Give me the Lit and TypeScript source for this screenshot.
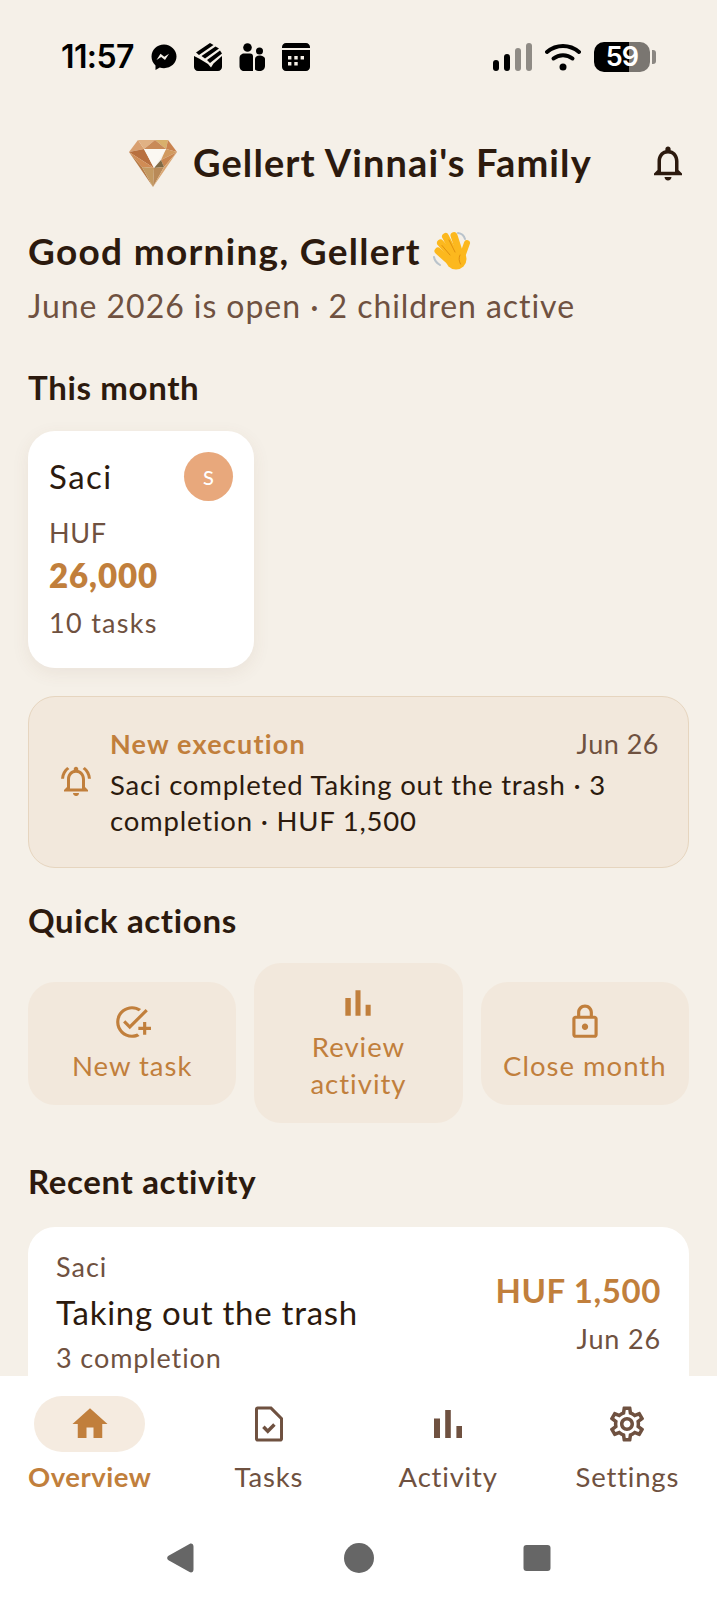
import { LitElement, html, css, svg } from "lit";
import { customElement } from "lit/decorators.js";

const BELL = "M12 22c1.1 0 2-.9 2-2h-4c0 1.1.9 2 2 2zm6-6v-5c0-3.07-1.63-5.64-4.5-6.32V4c0-.83-.67-1.5-1.5-1.5s-1.5.67-1.5 1.5v.68C7.64 5.36 6 7.92 6 11v5l-2 2v1h16v-1l-2-2zm-2 1H8v-6c0-2.48 1.51-4.5 4-4.5s4 2.02 4 4.5v6z";
const ALARM = "M7.58 4.08L6.15 2.65C3.75 4.48 2.17 7.3 2.03 10.5h2c.15-2.65 1.51-4.97 3.55-6.42zm12.39 6.42h2c-.15-3.2-1.73-6.02-4.12-7.85l-1.42 1.43c2.02 1.45 3.39 3.77 3.54 6.42zM18 11c0-3.07-1.64-5.64-4.5-6.32V4c0-.83-.67-1.5-1.5-1.5s-1.5.67-1.5 1.5v.68C7.63 5.36 6 7.92 6 11v5l-2 2v1h16v-1l-2-2v-5zm-2 6H8v-6c0-2.48 1.51-4.5 4-4.5s4 2.02 4 4.5v6zm-4 5c.14 0 .27-.01.4-.04.65-.14 1.18-.58 1.44-1.18.1-.24.15-.5.15-.78h-4c.01 1.1.9 2 2.01 2z";
const ADD_TASK = "M22 5.18L10.59 16.6l-4.24-4.24 1.41-1.41 2.83 2.83 10-10L22 5.18zM12 20c-4.41 0-8-3.59-8-8s3.59-8 8-8c1.57 0 3.04.46 4.28 1.25l1.45-1.45C16.1 2.67 14.13 2 12 2 6.48 2 2 6.48 2 12s4.48 10 10 10c1.73 0 3.36-.44 4.78-1.22l-1.5-1.5c-1 .46-2.11.72-3.28.72zm7-5h-3v2h3v3h2v-3h3v-2h-3v-3h-2v3z";
const CHART = "M5 9.2h3V19H5zM10.6 5h2.8v14h-2.8zm5.6 8H19v6h-2.8z";
const LOCK = "M18 8h-1V6c0-2.76-2.24-5-5-5S7 3.24 7 6v2H6c-1.1 0-2 .9-2 2v10c0 1.1.9 2 2 2h12c1.1 0 2-.9 2-2V10c0-1.1-.9-2-2-2zM9 6c0-1.66 1.34-3 3-3s3 1.34 3 3v2H9V6zm9 14H6V10h12v10zm-6-3c1.1 0 2-.9 2-2s-.9-2-2-2-2 .9-2 2 .9 2 2 2z";
const HOME = "M10 20v-6h4v6h5v-8h3L12 3 2 12h3v8z";
const TASK = "M5.500 2h8l6.500 6.500v12c0 .8-.7 1.500-1.500 1.500h-13C4.700 22 4 21.300 4 20.500v-17C4 2.700 4.700 2 5.500 2zM5.700 3.700v16.600h12.600V9.300L12.700 3.700zM8.100 14.300l1.400-1.400 1.800 1.800 3.100-3.100 1.400 1.400-4.500 4.500z";
const GEAR = "M19.43 12.98c.04-.32.07-.64.07-.98 0-.34-.03-.66-.07-.98l2.11-1.65c.19-.15.24-.42.12-.64l-2-3.46c-.09-.16-.26-.25-.44-.25-.06 0-.12.01-.17.03l-2.49 1c-.52-.4-1.08-.73-1.69-.98l-.38-2.65C14.46 2.18 14.25 2 14 2h-4c-.25 0-.46.18-.49.42l-.38 2.65c-.61.25-1.17.59-1.69.98l-2.49-1c-.06-.02-.12-.03-.18-.03-.17 0-.34.09-.43.25l-2 3.46c-.13.22-.07.49.12.64l2.11 1.65c-.04.32-.07.65-.07.98 0 .33.03.66.07.98l-2.11 1.65c-.19.15-.24.42-.12.64l2 3.46c.09.16.26.25.44.25.06 0 .12-.01.17-.03l2.49-1c.52.4 1.08.73 1.69.98l.38 2.65c.03.24.24.42.49.42h4c.25 0 .46-.18.49-.42l.38-2.65c.61-.25 1.17-.59 1.69-.98l2.49 1c.06.02.12.03.18.03.17 0 .34-.09.43-.25l2-3.46c.12-.22.07-.49-.12-.64l-2.11-1.65zm-1.98-1.71c.04.31.05.52.05.73 0 .21-.02.43-.05.73l-.14 1.13.89.7 1.08.84-.7 1.21-1.27-.51-1.04-.42-.9.68c-.43.32-.84.56-1.25.73l-1.06.43-.16 1.13-.2 1.35h-1.4l-.19-1.35-.16-1.13-1.06-.43c-.43-.18-.83-.41-1.23-.71l-.91-.7-1.06.43-1.27.51-.7-1.21 1.08-.84.89-.7-.14-1.13c-.03-.31-.05-.54-.05-.74s.02-.43.05-.73l.14-1.13-.89-.7-1.08-.84.7-1.21 1.27.51 1.04.42.9-.68c.43-.32.84-.56 1.25-.73l1.06-.43.16-1.13.2-1.35h1.39l.19 1.35.16 1.13 1.06.43c.43.18.83.41 1.23.71l.91.7 1.06-.43 1.27-.51.7 1.21-1.07.85-.89.7.14 1.13zM12 8c-2.21 0-4 1.79-4 4s1.79 4 4 4 4-1.79 4-4-1.79-4-4-4zm0 6c-1.1 0-2-.9-2-2s.9-2 2-2 2 .9 2 2-.9 2-2 2z";

// chart glyph sits small in its 24 box, so it gets a tighter viewBox
const icon = (d: string, size: number, box = "0 0 24 24") => html`<svg width=${size} height=${size} viewBox=${box} fill="currentColor" fill-rule="evenodd">${svg`<path d=${d}></path>`}</svg>`;

const actions = [
  { label: "New task", d: ADD_TASK, box: "0 0 24 24" },
  { label: "Review activity", d: CHART, box: "1.5 1.5 21 21" },
  { label: "Close month", d: LOCK, box: "0 0 24 24" },
];

const tabs = [
  { label: "Overview", d: HOME, box: "0 0 24 24", active: true },
  { label: "Tasks", d: TASK, box: "0 0 24 24", active: false },
  { label: "Activity", d: CHART, box: "1.5 1.5 21 21", active: false },
  { label: "Settings", d: GEAR, box: "0 0 24 24", active: false },
];

// facets of the gem logo: colour, points
const gem: [string, string][] = [
  ["#d9a070", "18,27 27,15 33,24"],
  ["#e0b184", "27,15 44,15 33,24"],
  ["#d8b06c", "44,15 57,15 55,24"],
  ["#c98a58", "44,15 33,24 55,24"],
  ["#c9834f", "57,15 66,27 55,24"],
  ["#b8703f", "18,27 33,24 43,43"],
  ["#d08c55", "18,27 43,43 31,42"],
  ["#b67a45", "18,27 31,42 42,62"],
  ["#c49a62", "31,42 43,43 42,62"],
  ["#d19a5f", "66,27 55,24 50,35"],
  ["#c98650", "66,27 50,35 53,42"],
  ["#7f6a45", "50,35 53,42 43,43"],
  ["#b98a58", "43,43 53,42 42,62"],
  ["#d9a672", "66,27 53,42 42,62"],
  ["#fbf8f2", "33,24 55,24 43,43"],
];

// the waving hand, one stroke per finger: x1 y1 x2 y2
const fingers = [
  [7, 21, 17, 30],
  [9.5, 13, 20, 25],
  [14.5, 6.5, 23, 23],
  [23, 5.5, 28, 21],
];

@customElement("app-root")
export class AppRoot extends LitElement {
  static styles = css`
    :host {
      display: block;
      font-family: "Lato", "Noto Sans", sans-serif;
      color: #2c1a0e;
    }
    * { box-sizing: border-box; }
    .screen {
      height: 1600px;
      display: flex;
      flex-direction: column;
      background: #f5f0e8;
      overflow: hidden;
    }

    .status {
      flex: none;
      height: 114px;
      padding: 0 61px;
      display: flex;
      align-items: center;
      color: #000;
    }
    .time {
      font: 600 32px/1 "Inter", sans-serif;
      letter-spacing: -0.6px;
      margin-right: 17px;
    }
    .status-icons { display: flex; align-items: center; gap: 17px; }
    .status-right { margin-left: auto; display: flex; align-items: center; gap: 13px; }
    .status svg { display: block; }
    .battery { display: flex; align-items: center; gap: 2px; }
    .battery-body {
      width: 56px;
      height: 30px;
      border-radius: 10px;
      background: linear-gradient(90deg, #000 62%, #7a7671 62%);
      color: #fff;
      font: 600 27px/30px "Inter", sans-serif;
      letter-spacing: -1px;
      text-align: center;
    }
    .battery-nub { width: 4px; height: 14px; border-radius: 0 3px 3px 0; background: #8b8782; }

    .header {
      flex: none;
      height: 100px;
      padding: 0 28px 0 128px;
      display: flex;
      align-items: center;
      gap: 15px;
    }
    .header h1 {
      margin: 0 0 4px;
      font-size: 38px;
      line-height: 48px;
      font-weight: 700;
      letter-spacing: 1.1px;
    }
    .header .bell { margin-left: auto; display: block; color: #2c1a0e; }
    .logo { display: block; }

    .content { flex: 1; min-height: 0; overflow: hidden; padding: 15px 28px 0; }
    .greeting { display: flex; align-items: center; gap: 10px; }
    .greeting h2 { margin: 0; font-size: 37px; line-height: 44px; font-weight: 700; letter-spacing: 1.3px; }
    .sub {
      margin: 13px 0 0;
      font-size: 32px;
      line-height: 40px;
      color: #6f5140;
      letter-spacing: 0.95px;
    }
    .section {
      margin: 41px 0 0;
      font-size: 33px;
      line-height: 40px;
      font-weight: 700;
      letter-spacing: 0.65px;
    }

    .child {
      margin-top: 24px;
      width: 226px;
      height: 237px;
      padding: 21px 21px 0;
      background: #fff;
      border-radius: 27px;
      box-shadow: 0 5px 18px rgba(110, 80, 50, 0.08);
    }
    .child-top { display: flex; align-items: center; justify-content: space-between; }
    .child-name { font-size: 33px; line-height: 49px; letter-spacing: 1.5px; }
    .avatar {
      width: 49px;
      height: 49px;
      border-radius: 50%;
      background: #e8a87c;
      color: #fff;
      font-size: 20px;
      font-weight: 500;
      display: flex;
      align-items: center;
      justify-content: center;
    }
    .child-cur { margin-top: 15px; font-size: 27px; line-height: 34px; color: #6f5140; letter-spacing: 0.6px; }
    .child-amt { margin-top: 4px; font-size: 33px; line-height: 42px; font-weight: 800; color: #c17f3c; letter-spacing: 0.9px; }
    .child-tasks { margin-top: 9px; font-size: 27px; line-height: 36px; color: #6f5140; letter-spacing: 1.3px; }

    .alert {
      margin-top: 28px;
      height: 172px;
      padding: 29px 29px 28px;
      display: flex;
      align-items: center;
      gap: 16px;
      background: #f2e8dc;
      border: 1.5px solid #e6d5bf;
      border-radius: 27px;
    }
    .alert-icon { flex: none; display: block; color: #c17f3c; }
    .alert-body { flex: 1; min-width: 0; }
    .alert-head { display: flex; justify-content: space-between; line-height: 36px; font-size: 27px; }
    .alert-title { font-weight: 700; color: #c17f3c; letter-spacing: 1.2px; }
    .alert-date { color: #6f5140; letter-spacing: 0.5px; }
    .alert-text { margin: 5px 0 0; font-size: 27.5px; line-height: 36px; letter-spacing: 0.8px; }

    .section.quick { margin-top: 32px; }
    .actions {
      margin-top: 23px;
      display: grid;
      grid-template-columns: repeat(3, 1fr);
      gap: 18px;
      align-items: center;
    }
    .action {
      padding: 21px 20px 21px;
      display: flex;
      flex-direction: column;
      align-items: center;
      gap: 6px;
      background: #f2e8dc;
      border-radius: 27px;
      color: #c17f3c;
      text-align: center;
      font-size: 27.5px;
      line-height: 37px;
      letter-spacing: 1px;
    }
    .action svg { display: block; }
    .action-wrap { padding: 21px 40px 21px; }

    .section.recent { margin-top: 38px; }
    .activity {
      margin-top: 26px;
      padding: 22px 28px 28px;
      display: flex;
      justify-content: space-between;
      background: #fff;
      border-radius: 27px;
    }
    .act-who { font-size: 27px; line-height: 36px; color: #6f5140; letter-spacing: 1px; }
    .act-name { margin-top: 6px; font-size: 33px; line-height: 42px; letter-spacing: 0.75px; }
    .act-count { margin-top: 7px; font-size: 27px; line-height: 36px; color: #6f5140; letter-spacing: 0.9px; }
    .act-right { padding-top: 19px; text-align: right; }
    .act-amt { font-size: 33px; line-height: 44px; font-weight: 700; color: #c17f3c; letter-spacing: 0.6px; }
    .act-date { margin-top: 9px; font-size: 27px; line-height: 36px; color: #6f5140; letter-spacing: 0.85px; }

    .bottom { flex: none; height: 224px; background: #fff; }
    .tabs { padding-top: 20px; display: grid; grid-template-columns: repeat(4, 1fr); }
    .tab { display: flex; flex-direction: column; align-items: center; color: #6f5140; }
    .tab-pill {
      width: 111px;
      height: 56px;
      border-radius: 28px;
      display: flex;
      align-items: center;
      justify-content: center;
    }
    .tab-label { margin-top: 7px; font-size: 27.5px; line-height: 36px; letter-spacing: 0.8px; }
    .tab.on { color: #c17f3c; }
    .tab.on .tab-pill { background: #f5ebe0; }
    .tab.on .tab-label { font-weight: 700; letter-spacing: 0.5px; }

    .sysnav {
      margin-top: 48px;
      display: grid;
      grid-template-columns: repeat(3, 178px);
      justify-content: center;
      justify-items: center;
    }
    .sysnav svg { display: block; }
  `;

  render() {
    return html`
      <div class="screen">
        ${this.renderStatus()}
        <header class="header">
          <svg class="logo" width="50" height="50" viewBox="17 14 50 50">
            ${gem.map(([fill, points]) => svg`<polygon fill=${fill} points=${points}></polygon>`)}
          </svg>
          <h1>Gellert Vinnai's Family</h1>
          <span class="bell">${icon(BELL, 42)}</span>
        </header>
        <main class="content">
          <div class="greeting">
            <h2>Good morning, Gellert</h2>
            <svg width="42" height="42" viewBox="0 0 42 42" stroke-linecap="round">
              <circle cx="25" cy="29" r="10.500" fill="#fcb81e"></circle>
              ${fingers.map(([x1, y1, x2, y2]) => svg`<line x1=${x1} y1=${y1} x2=${x2} y2=${y2} stroke="#fcb81e" stroke-width="7"></line>`)}
              <line x1="36" y1="13" x2="31" y2="27" stroke="#fcb81e" stroke-width="6"></line>
              <path fill="none" stroke="#e0900f" stroke-width="1" d="M11 15.500 19 25M18 10 24 22M29 25c-1.500 3-1 6 .500 9"></path>
              <path fill="none" stroke="#b9c3cb" stroke-width="2" d="M3 27c.5 3 2.500 6 6 8M27 3c3 .3 6 2.500 7 6"></path>
            </svg>
          </div>
          <p class="sub">June 2026 is open · 2 children active</p>

          <h3 class="section">This month</h3>
          <div class="child">
            <div class="child-top">
              <span class="child-name">Saci</span>
              <span class="avatar">S</span>
            </div>
            <div class="child-cur">HUF</div>
            <div class="child-amt">26,000</div>
            <div class="child-tasks">10 tasks</div>
          </div>

          <div class="alert">
            <span class="alert-icon">${icon(ALARM, 36)}</span>
            <div class="alert-body">
              <div class="alert-head">
                <span class="alert-title">New execution</span>
                <span class="alert-date">Jun 26</span>
              </div>
              <p class="alert-text">Saci completed Taking out the trash · 3 completion · HUF 1,500</p>
            </div>
          </div>

          <h3 class="section quick">Quick actions</h3>
          <div class="actions">
            ${actions.map(
              (a) => html`<div class="action ${a.label === "Review activity" ? "action-wrap" : ""}">
                ${icon(a.d, 38, a.box)}
                <span>${a.label}</span>
              </div>`
            )}
          </div>

          <h3 class="section recent">Recent activity</h3>
          <div class="activity">
            <div>
              <div class="act-who">Saci</div>
              <div class="act-name">Taking out the trash</div>
              <div class="act-count">3 completion</div>
            </div>
            <div class="act-right">
              <div class="act-amt">HUF 1,500</div>
              <div class="act-date">Jun 26</div>
            </div>
          </div>
        </main>
        <nav class="bottom">
          <div class="tabs">
            ${tabs.map(
              (t) => html`<div class="tab ${t.active ? "on" : ""}">
                <span class="tab-pill">${icon(t.d, 42, t.box)}</span>
                <span class="tab-label">${t.label}</span>
              </div>`
            )}
          </div>
          <div class="sysnav">
            <svg width="30" height="30" viewBox="0 0 30 30"><path fill="#666" d="M2.500 12.800 23.500 1c2-1 4 0 4 2.500v23c0 2.500-2 3.500-4 2.500L2.500 17.200c-1.800-1-1.800-3.400 0-4.400z"></path></svg>
            <svg width="30" height="30" viewBox="0 0 30 30"><circle cx="15" cy="15" r="15" fill="#666"></circle></svg>
            <svg width="30" height="30" viewBox="0 0 30 30"><rect x="1.500" y="2" width="27" height="26" rx="3" fill="#666"></rect></svg>
          </div>
        </nav>
      </div>
    `;
  }

  renderStatus() {
    return html`
      <div class="status">
        <span class="time">11:57</span>
        <div class="status-icons">
          <svg width="26" height="27" viewBox="0 0 26 27">
            <path d="M13 .5C6 .5.500 5.700.500 12.600c0 3.600 1.500 6.700 4 8.900V26l4.300-2.400c1.300.4 2.700.6 4.200.6 7 0 12.500-5.200 12.500-11.600S20 .5 13 .5z"></path>
            <path fill="#f5f0e8" d="m5.500 16 4-6.300 3.800 3 4.700-3-4 6.300-3.800-3z"></path>
          </svg>
          <svg width="28" height="28" viewBox="0 0 28 28">
            <path d="M0 13 5 15.500 14 21 17 24.500 19.500 20.500 28 13V24c0 2.200-1.800 4-4 4H4c-2.200 0-4-1.800-4-4z"></path>
            <path d="M2 9.500 16 0 19.500 2 5 12zM7.500 13 21.500 3.500 25 5.500 11 15.500zM13 17 26 7.500 28 10.500 16 20z"></path>
          </svg>
          <svg width="26" height="28" viewBox="0 0 26 28">
            <circle cx="8.500" cy="4.500" r="4.300"></circle>
            <circle cx="20.500" cy="8" r="3.500"></circle>
            <path d="M.500 15c0-3 2.500-4.500 4.500-4.500h6c2 0 3 1 3 3V28h-9c-2.500 0-4.500-2-4.500-5z"></path>
            <path d="M16 16c0-2 2-3.500 4.500-3.500S26 14 26 16v7c0 3-2.500 5-5.500 5-1.500 0-3.500-.5-4.500-1.500z"></path>
          </svg>
          <svg width="28" height="28" viewBox="0 0 28 28" fill-rule="evenodd">
            <path d="M4 0h20c2.200 0 4 1.800 4 4v1H0V4c0-2.200 1.800-4 4-4zM0 7h28v17c0 2.200-1.800 4-4 4H4c-2.200 0-4-1.800-4-4zm6 6v3.400h3.400V13zm6.300 0v3.400h3.400V13zm6.300 0v3.400H22V13zM6 19v3.400h3.400V19zm6.300 0v3.400h3.400V19z"></path>
          </svg>
        </div>
        <div class="status-right">
          <svg width="39" height="28" viewBox="0 0 39 28">
            <rect x="0" y="17" width="6" height="11" rx="3"></rect>
            <rect x="11" y="11" width="6" height="17" rx="3"></rect>
            <rect x="22" y="5" width="6" height="23" rx="3" fill="#8f8b85"></rect>
            <rect x="33" y="0" width="6" height="28" rx="3" fill="#8f8b85"></rect>
          </svg>
          <svg width="36" height="28" viewBox="0 0 36 28" fill="none" stroke="#000" stroke-width="4" stroke-linecap="round">
            <path d="M2 9c9.500-8 22.500-8 32 0"></path>
            <path d="M8.500 15.500c5.500-4.500 13.500-4.500 19 0"></path>
            <circle cx="18" cy="24" r="3.500" fill="#000" stroke="none"></circle>
          </svg>
          <div class="battery">
            <div class="battery-body">59</div>
            <div class="battery-nub"></div>
          </div>
        </div>
      </div>
    `;
  }
}
